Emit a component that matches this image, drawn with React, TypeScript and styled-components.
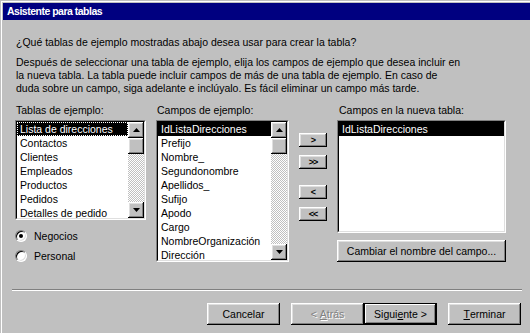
import React from 'react'
import styled, { createGlobalStyle, css } from 'styled-components'

const GlobalStyle = createGlobalStyle`
  html, body {
    margin: 0;
    padding: 0;
    background: #c0c0c0;
  }
  body {
    font-family: "Liberation Sans", Arial, sans-serif;
    font-size: 10.5px;
    color: #000;
  }
`

const raised = css`
  background: #c0c0c0;
  box-shadow: inset -1px -1px #000, inset 1px 1px #fff, inset -2px -2px #808080, inset 2px 2px #dfdfdf;
`

const Window = styled.div`
  width: 530px;
  height: 333px;
  box-sizing: border-box;
  overflow: hidden;
  border-top: 1px solid #c0c0c0;
  border-left: 1px solid #c0c0c0;
  box-shadow: inset 1px 1px #fff;
  padding: 2px 0 0 2px;
  background: #c0c0c0;
`

const TitleBar = styled.div`
  height: 17px;
  background: #000080;
  color: #fff;
  font-weight: bold;
  font-size: 10.5px;
  letter-spacing: -0.5px;
  line-height: 17px;
  padding-left: 4px;
`

const Body = styled.div`
  padding-left: 13px;
  display: flex;
  flex-direction: column;
`

const Question = styled.div`
  margin-top: 16px;
  line-height: 13px;
`

const Intro = styled.div`
  margin-top: 7px;
  line-height: 13px;
`

const Columns = styled.div`
  margin-top: 9px;
  margin-left: -1px;
  display: flex;
  gap: 10px;
  align-items: flex-start;
`

const Column = styled.div<{ $width: number }>`
  width: ${(p) => p.$width}px;
  display: flex;
  flex-direction: column;
`

const Label = styled.div<{ $indent?: number }>`
  line-height: 13px;
  padding-left: ${(p) => p.$indent ?? 1}px;
  margin-bottom: 3px;
`

const ListFrame = styled.div<{ $height: number }>`
  height: ${(p) => p.$height}px;
  box-sizing: border-box;
  border: 1px solid;
  border-color: #808080 #fff #fff #808080;
  display: flex;
`

const ListInner = styled.div`
  flex: 1;
  display: flex;
  border: 1px solid;
  border-color: #000 #dfdfdf #dfdfdf #000;
  background: #fff;
  overflow: hidden;
`

const Items = styled.div`
  flex: 1;
  min-width: 0;
`

const Item = styled.div<{ $selected?: boolean; $focus?: boolean }>`
  height: 14px;
  line-height: 14px;
  padding-left: 3px;
  white-space: nowrap;
  box-sizing: border-box;
  ${(p) => p.$selected && css`
    background: #000;
    color: #fff;
  `}
  ${(p) => p.$focus && css`
    outline: 1px dotted #fff;
    outline-offset: -1px;
  `}
`

const ScrollBar = styled.div`
  width: 16px;
  display: flex;
  flex-direction: column;
  background: repeating-conic-gradient(#c0c0c0 0% 25%, #fff 0% 50%) 0 0 / 2px 2px;
`

const ScrollButton = styled.div`
  ${raised}
  width: 16px;
  height: 16px;
  display: flex;
  align-items: center;
  justify-content: center;
`

const Thumb = styled.div`
  ${raised}
  width: 16px;
  height: 16px;
`

const Track = styled.div`
  flex: 1;
`

const RadioGroup = styled.div`
  margin-top: 6px;
  display: flex;
  flex-direction: column;
`

const RadioRow = styled.label`
  height: 20px;
  display: flex;
  align-items: center;
  gap: 7px;
`

const RadioDot = styled.span<{ $checked?: boolean }>`
  width: 12px;
  height: 12px;
  box-sizing: border-box;
  border-radius: 50%;
  border: 1px solid;
  border-color: #808080 #fff #fff #808080;
  background: #fff;
  box-shadow: inset 1px 1px #000, inset -1px -1px #dfdfdf;
  display: flex;
  align-items: center;
  justify-content: center;
  &::after {
    content: '';
    width: 4px;
    height: 4px;
    border-radius: 50%;
    background: ${(p) => (p.$checked ? '#000' : 'transparent')};
  }
`

const MoveButtons = styled.div`
  width: 28px;
  padding-top: 29px;
  display: flex;
  flex-direction: column;
`

const MoveButton = styled.div<{ $gap?: number }>`
  ${raised}
  height: 14px;
  margin-top: ${(p) => p.$gap ?? 0}px;
  display: flex;
  align-items: center;
  justify-content: center;
  font-size: 9px;
  font-weight: bold;
  letter-spacing: -1px;
`

const WideButton = styled.div`
  ${raised}
  margin-top: 7px;
  height: 22px;
  display: flex;
  align-items: center;
  justify-content: center;
`

const Separator = styled.div`
  margin: 23px 8px 0 9px;
  border-top: 1px solid #808080;
  border-bottom: 1px solid #fff;
`

const Footer = styled.div`
  display: flex;
  justify-content: flex-end;
  gap: 11px;
  padding: 12px 9px 0 0;
`

const ButtonPair = styled.div`
  display: flex;
`

const Button = styled.div<{ $default?: boolean; $disabled?: boolean }>`
  ${raised}
  width: 73px;
  height: 22px;
  box-sizing: border-box;
  display: flex;
  align-items: center;
  justify-content: center;
  white-space: pre;
  ${(p) => p.$default && css`
    box-shadow: inset 0 0 0 1px #000, inset -2px -2px #000, inset 2px 2px #fff, inset -3px -3px #808080;
  `}
  ${(p) => p.$disabled && css`
    color: #808080;
    text-shadow: 1px 1px #fff;
  `}
`

const UpArrow = () => (
  <svg width="7" height="4" viewBox="0 0 7 4"><path d="M3.5 0L7 4H0z" fill="#000" /></svg>
)

const DownArrow = () => (
  <svg width="7" height="4" viewBox="0 0 7 4"><path d="M0 0H7L3.5 4z" fill="#000" /></svg>
)

const VScroll = () => (
  <ScrollBar>
    <ScrollButton><UpArrow /></ScrollButton>
    <Thumb />
    <Track />
    <ScrollButton><DownArrow /></ScrollButton>
  </ScrollBar>
)

const tablas = ['Lista de direcciones', 'Contactos', 'Clientes', 'Empleados', 'Productos', 'Pedidos', 'Detalles de pedido']
const campos = ['IdListaDirecciones', 'Prefijo', 'Nombre_', 'Segundonombre', 'Apellidos_', 'Sufijo', 'Apodo', 'Cargo', 'NombreOrganización', 'Dirección']

export default function App () {
  return (
    <>
      <GlobalStyle />
      <Window>
        <TitleBar>Asistente para tablas</TitleBar>
        <Body>
          <Question>¿Qué tablas de ejemplo mostradas abajo desea usar para crear la tabla?</Question>
          <Intro>
            Después de seleccionar una tabla de ejemplo, elija los campos de ejemplo que desea incluir en<br />
            la nueva tabla. La tabla puede incluir campos de más de una tabla de ejemplo. En caso de<br />
            duda sobre un campo, siga adelante e inclúyalo. Es fácil eliminar un campo más tarde.
          </Intro>
          <Columns>
            <Column $width={131}>
              <Label>Tablas de ejemplo:</Label>
              <ListFrame $height={100}>
                <ListInner>
                  <Items>
                    {tablas.map((t, i) => (
                      <Item key={t} $selected={i === 0} $focus={i === 0}>{t}</Item>
                    ))}
                  </Items>
                  <VScroll />
                </ListInner>
              </ListFrame>
              <RadioGroup>
                <RadioRow><RadioDot $checked />Negocios</RadioRow>
                <RadioRow><RadioDot />Personal</RadioRow>
              </RadioGroup>
            </Column>
            <Column $width={133}>
              <Label>Campos de ejemplo:</Label>
              <ListFrame $height={142}>
                <ListInner>
                  <Items>
                    {campos.map((c, i) => (
                      <Item key={c} $selected={i === 0}>{c}</Item>
                    ))}
                  </Items>
                  <VScroll />
                </ListInner>
              </ListFrame>
            </Column>
            <MoveButtons>
              <MoveButton>&gt;</MoveButton>
              <MoveButton $gap={8}>&gt;&gt;</MoveButton>
              <MoveButton $gap={16}>&lt;</MoveButton>
              <MoveButton $gap={8}>&lt;&lt;</MoveButton>
            </MoveButtons>
            <Column $width={169}>
              <Label $indent={2}>Campos en la nueva tabla:</Label>
              <ListFrame $height={113}>
                <ListInner>
                  <Items>
                    <Item $selected>IdListaDirecciones</Item>
                  </Items>
                </ListInner>
              </ListFrame>
              <WideButton>Cambiar el nombre del campo...</WideButton>
            </Column>
          </Columns>
        </Body>
        <Separator />
        <Footer>
          <Button>Cancelar</Button>
          <ButtonPair>
            <Button $disabled>&lt; <u>A</u>trás</Button>
            <Button $default>Sigui<u>e</u>nte &gt;</Button>
          </ButtonPair>
          <Button><u>T</u>erminar</Button>
        </Footer>
      </Window>
    </>
  )
}
